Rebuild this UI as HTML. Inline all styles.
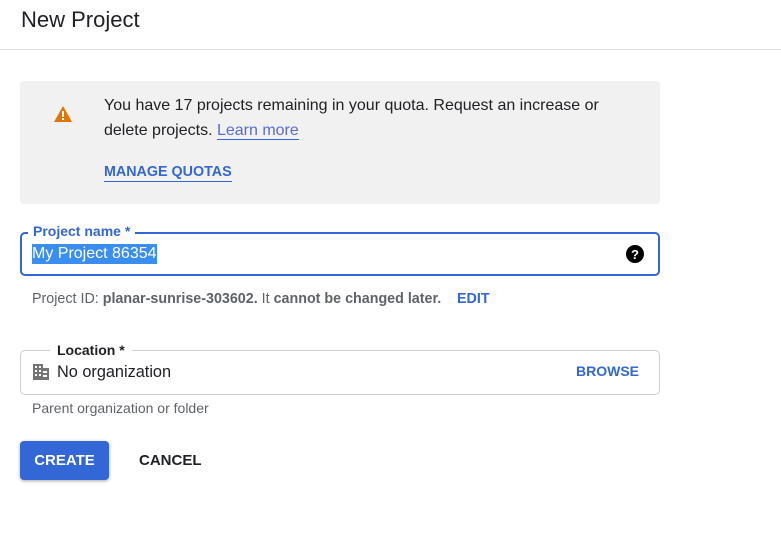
<!DOCTYPE html>
<html><head><style>
*{box-sizing:border-box;margin:0;padding:0}
body{width:781px;height:542px;background:#fff;font-family:"Liberation Sans",Arial,sans-serif;position:relative;overflow:hidden;color:#202124}
.a{position:absolute;white-space:nowrap}
</style></head><body>
<div class="a" style="left:21px;top:7px;font-size:22px;color:#202124">New Project</div>
<div class="a" style="left:0;top:49px;width:781px;height:1px;background:#dadce0"></div>

<div class="a" style="left:20px;top:81px;width:640px;height:123px;background:#f1f1f1;border-radius:4px"></div>
<svg class="a" style="left:53px;top:105px" width="20" height="18" viewBox="0 0 20 18"><path d="M10 1L19 17H1Z" fill="#e37400"/><rect x="9" y="6" width="2" height="6" fill="#fff"/><rect x="9" y="13" width="2" height="2" fill="#fff"/></svg>
<div class="a" style="left:104px;top:93px;font-size:16px;line-height:25px;color:#202124">You have 17 projects remaining in your quota. Request an increase or<br>delete projects. <span style="color:#5b6bd0;border-bottom:1px solid #3367d6">Learn more</span></div>
<div class="a" style="left:104px;top:163px;font-size:14.3px;font-weight:bold;color:#3367d6;border-bottom:1px solid #3367d6;line-height:18px">MANAGE QUOTAS</div>

<div class="a" style="left:20px;top:232px;width:640px;height:44px;border:2px solid #3367d6;border-radius:5px"></div>
<div class="a" style="left:28px;top:222px;background:#fff;padding:0 5px;font-size:14px;color:#3367d6;font-weight:bold;line-height:18px">Project name *</div>
<div class="a" style="left:32px;top:244px;font-size:16px;color:#fff;background:#3a8ef0;line-height:20px">My Project 86354</div>
<svg class="a" style="left:626px;top:245px" width="18" height="18" viewBox="0 0 18 18"><circle cx="9" cy="9" r="9" fill="#000"/><text x="9" y="14" font-size="13" font-weight="bold" fill="#fff" text-anchor="middle" font-family="Liberation Sans">?</text></svg>
<div class="a" style="left:32px;top:291px;font-size:14.3px;color:#5f6368">Project ID: <b style="color:#5f6368">planar-sunrise-303602.</b> It <b>cannot be changed later.</b></div>
<div class="a" style="left:457px;top:291px;font-size:14.3px;color:#3367d6;font-weight:bold">EDIT</div>

<div class="a" style="left:20px;top:350px;width:640px;height:45px;border:1px solid #cfcfcf;border-radius:5px"></div>
<div class="a" style="left:50px;top:341px;background:#fff;padding:0 7px;font-size:14px;font-weight:bold;color:#202124;line-height:18px">Location *</div>
<svg class="a" style="left:32px;top:363px" width="18" height="18" viewBox="0 0 18 18"><path d="M1 1h10v4h6v12H1z" fill="#757575"/><g fill="#fff"><rect x="3" y="3" width="2" height="2"/><rect x="7" y="3" width="2" height="2"/><rect x="3" y="7" width="2" height="2"/><rect x="7" y="7" width="2" height="2"/><rect x="3" y="11" width="2" height="2"/><rect x="7" y="11" width="2" height="2"/><rect x="11" y="8" width="4" height="2"/><rect x="11" y="12" width="4" height="2"/></g></svg>
<div class="a" style="left:57px;top:363px;font-size:16.3px;color:#202124">No organization</div>
<div class="a" style="left:576px;top:363px;font-size:14px;font-weight:bold;color:#3367d6">BROWSE</div>
<div class="a" style="left:32px;top:400px;font-size:14px;color:#5f6368">Parent organization or folder</div>

<div class="a" style="left:20px;top:441px;width:89px;height:39px;background:#3367d6;border-radius:4px;box-shadow:0 1px 3px rgba(0,0,0,.35);color:#fff;font-size:15px;font-weight:bold;text-align:center;line-height:39px">CREATE</div>
<div class="a" style="left:139px;top:452px;font-size:15px;font-weight:bold;color:#202124">CANCEL</div>
</body></html>
